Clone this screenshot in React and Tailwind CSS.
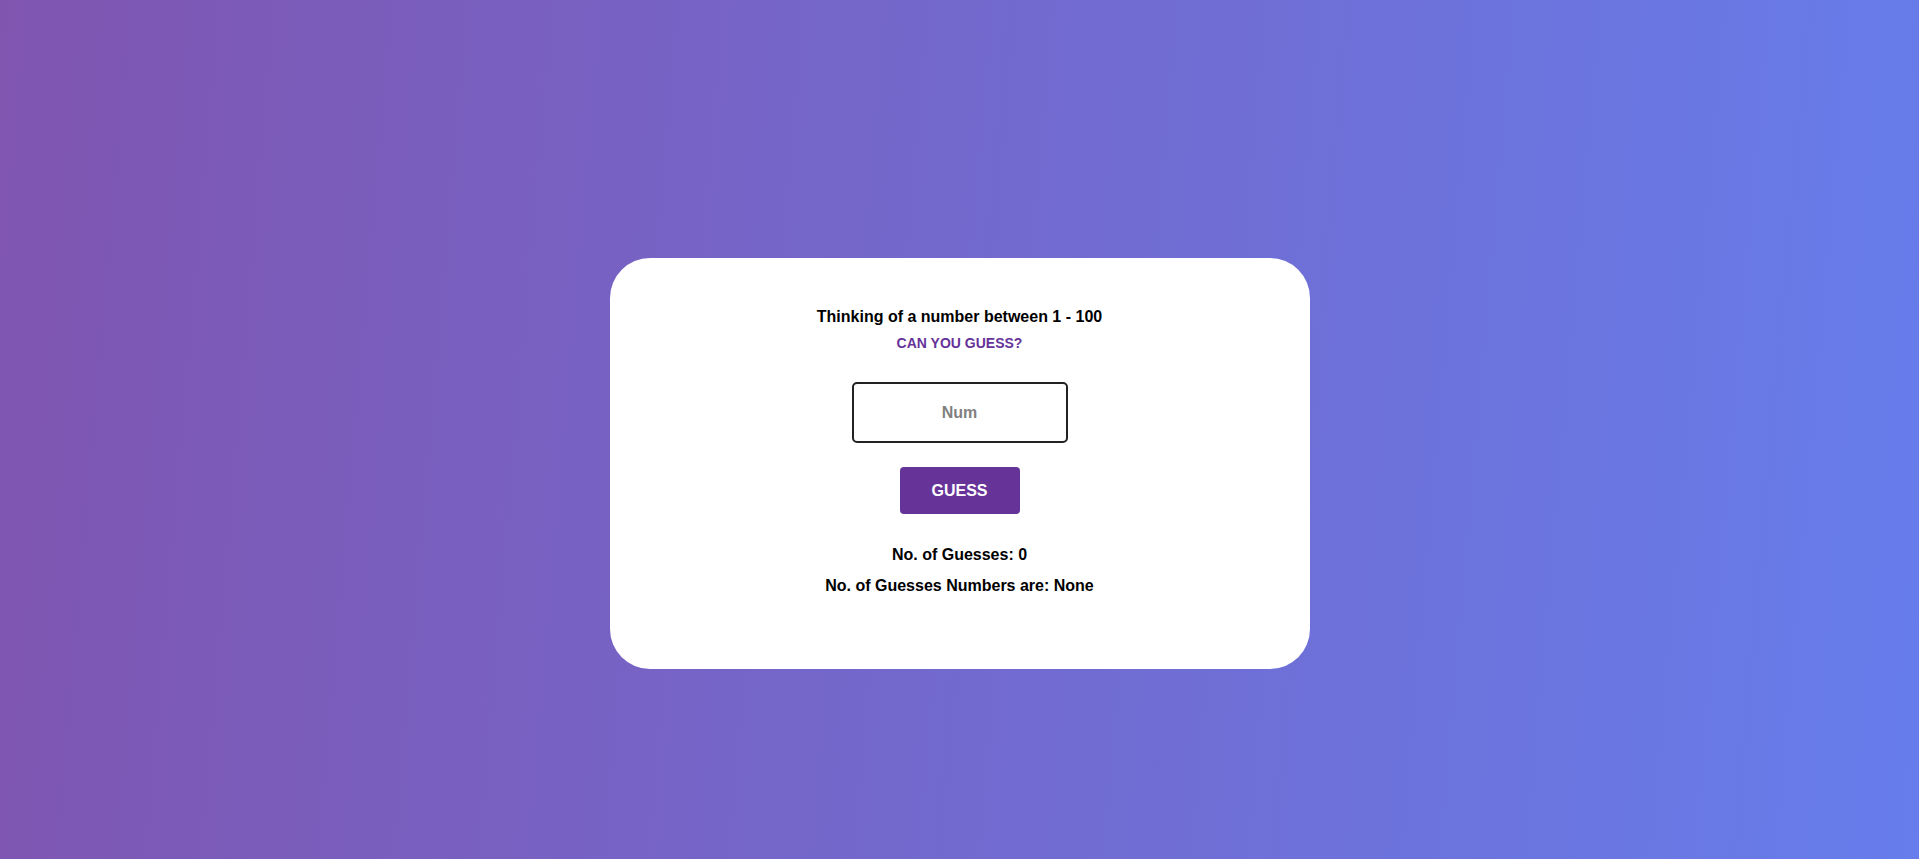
import { useState } from 'react';

export default function App() {
  const [num, setNum] = useState('');
  const [guesses, setGuesses] = useState([]);

  const handleGuess = () => {
    if (num === '') return;
    setGuesses([...guesses, num]);
    setNum('');
  };

  return (
    <div
      className="min-h-[859px] w-full flex justify-center pt-[258px] bg-[linear-gradient(95deg,#7f55b0,#667deb)]"
      style={{ fontFamily: '"Liberation Sans", Arial, sans-serif' }}
    >
      <div className="w-[700px] h-[411px] bg-white rounded-[40px] flex flex-col items-center pt-[49px]">
        <h2 className="text-[16px] leading-[20px] font-bold text-black">Thinking of a number between 1 - 100</h2>
        <p className="mt-[8px] text-[14px] leading-[17px] font-bold text-[#663399] uppercase">Can you guess?</p>

        {/* input */}
        <input
          type="text"
          inputMode="numeric"
          value={num}
          onChange={(e) => setNum(e.target.value)}
          placeholder="Num"
          className="mt-[30px] w-[216px] h-[61px] border-2 border-[#222] rounded-[5px] text-center text-[16px] font-bold text-black placeholder:text-[#808080] outline-none"
        />

        <button
          type="button"
          onClick={handleGuess}
          className="mt-[24px] w-[120px] h-[47px] bg-[#663399] rounded-[4px] text-white text-[16px] font-bold"
        >
          GUESS
        </button>

        <p className="mt-[31px] text-[16px] leading-[20px] font-bold text-black">No. of Guesses: {guesses.length}</p>
        <p className="mt-[11px] text-[16px] leading-[20px] font-bold text-black">
          No. of Guesses Numbers are: {guesses.length ? guesses.join(', ') : 'None'}
        </p>
      </div>
    </div>
  );
}
